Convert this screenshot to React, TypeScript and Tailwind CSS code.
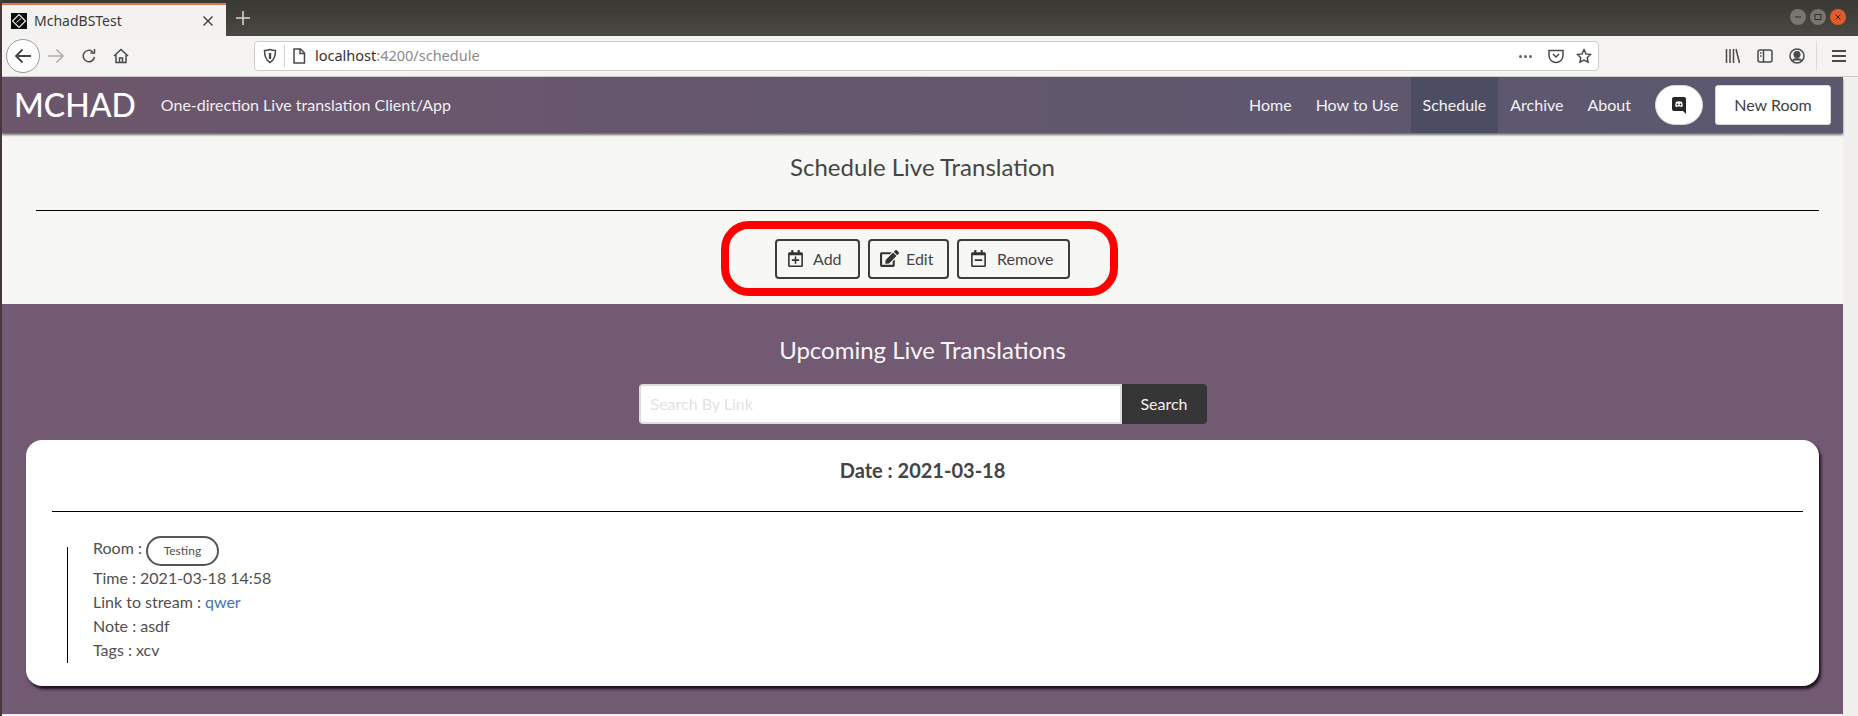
import React from "react";
import { FaRegCalendarPlus, FaRegCalendarMinus, FaEdit } from "react-icons/fa";

const ui = "font-['Noto_Sans',sans-serif]";

function Ico({ className, children, w = 16, h = 16 }: { className?: string; children: React.ReactNode; w?: number; h?: number }) {
  return (
    <svg width={w} height={h} viewBox={`0 0 ${w} ${h}`} fill="none" stroke="#4a4a4a" strokeWidth={1.5} className={className}>
      {children}
    </svg>
  );
}

function WinBtn({ bg, children }: { bg: string; children: React.ReactNode }) {
  return (
    <div className={`w-[16px] h-[16px] rounded-full flex items-center justify-center ${bg}`}>
      <svg width="8" height="8" viewBox="0 0 8 8" fill="none" stroke="#2f2e2a" strokeWidth="1">{children}</svg>
    </div>
  );
}

function NavItem({ label, active }: { label: string; active?: boolean }) {
  return (
    <a className={`h-full flex items-center px-[12px] text-[16px] text-[#f4f2f5] ${active ? "bg-[#4c4d63]" : ""}`}>{label}</a>
  );
}

function ActionBtn({ icon, label, className }: { icon: React.ReactNode; label: string; className: string }) {
  return (
    <button className={`h-[40px] flex items-center border-2 border-[#3c3c3c] rounded-[4px] text-[16px] text-[#454545] ${className}`}>
      {icon}
      <span>{label}</span>
    </button>
  );
}

export default function App() {
  return (
    <div className="w-[1858px] h-[716px] overflow-hidden flex flex-col border-l-2 border-[#45393a] bg-[#f2f0ee] font-['Lato',sans-serif]">
      <div className={`h-[36px] flex items-stretch bg-gradient-to-b from-[#3a3833] to-[#4a4843] ${ui}`}>
        <div className="mt-[3px] w-[224px] flex items-center pl-[9px] pr-[12px] bg-[#f3f2f0] border-t-2 border-[#e2734f]">
          <svg width="16" height="16" viewBox="0 0 16 16" className="shrink-0">
            <rect width="16" height="16" fill="#0b0b0b" />
            <path d="M8 1.5 14.5 8 8 14.5 1.5 8Z" fill="none" stroke="#e8e8e8" strokeWidth="1.2" />
            <path d="M5.5 9.5 10 5.5" stroke="#e8e8e8" strokeWidth="1" />
          </svg>
          <span className="ml-[7px] text-[14px] text-[#3b3b3b]">MchadBSTest</span>
          <svg width="12" height="12" viewBox="0 0 12 12" className="ml-auto" stroke="#3b3b3b" strokeWidth="1.4">
            <path d="M1.5 1.5 10.5 10.5M10.5 1.5 1.5 10.5" />
          </svg>
        </div>
        <div className="ml-[10px] flex items-center">
          <svg width="14" height="14" viewBox="0 0 14 14" stroke="#d9d8d4" strokeWidth="1.5"><path d="M7 0V14M0 7H14" /></svg>
        </div>
        <div className="ml-auto mr-[12px] flex items-center gap-[4px] pb-[2px]">
          <WinBtn bg="bg-[#77766f]"><path d="M1 4H7" /></WinBtn>
          <WinBtn bg="bg-[#77766f]"><rect x="1" y="1.5" width="6" height="5" /></WinBtn>
          <WinBtn bg="bg-[#e2592c]"><path d="M1.5 1.5 6.5 6.5M6.5 1.5 1.5 6.5" /></WinBtn>
        </div>
      </div>

      <div className={`h-[41px] flex items-center bg-[#f4f3f1] border-b border-[#cfcdca] ${ui}`}>
        <div className="ml-[4px] w-[34px] h-[34px] rounded-full border border-[#9a9a98] bg-white flex items-center justify-center">
          <svg width="18" height="16" viewBox="0 0 18 16" fill="none" stroke="#444" strokeWidth="1.8"><path d="M17 8H2M8.5 1.5 2 8l6.5 6.5" /></svg>
        </div>
        <svg width="17" height="16" viewBox="0 0 17 16" fill="none" stroke="#b0b0ae" strokeWidth="1.6" className="ml-[8px]"><path d="M0 8H15M8.5 1.5 15 8 8.5 14.5" /></svg>
        <Ico className="ml-[16px]">
          <path d="M13.5 9a5.7 5.7 0 1 1-1.6-5" />
          <path d="M13.5 1v4h-4" />
        </Ico>
        <Ico className="ml-[16px]">
          <path d="M1 8 8 1.5 15 8" />
          <path d="M3 7v7.5h10V7" />
          <path d="M6.5 14.5V10h3v4.5" />
        </Ico>
        <div className="ml-[125px] w-[1345px] h-[30px] flex items-center bg-white border border-[#cfcdca] rounded-[4px]">
          <Ico className="ml-[8px]" w={14} h={16}>
            <path d="M7 1.5c2 .8 3.6 1 5.5 1 0 6-1.6 9.8-5.5 12-3.9-2.2-5.5-6-5.5-12 1.9 0 3.5-.2 5.5-1Z" />
            <path d="M7 5v6" strokeWidth="2.4" />
          </Ico>
          <div className="ml-[7px] w-px h-[22px] bg-[#d5d4d1]" />
          <Ico className="ml-[7px]" w={14} h={16}>
            <path d="M2 1h6.5L12.500 5v10H2Z" />
            <path d="M8 1v4.500h4.500" />
          </Ico>
          <span className="ml-[9px] text-[14.500px] text-[#333]">
            localhost<span className="text-[#8a8a8a]">:4200/schedule</span>
          </span>
          <div className="ml-auto flex items-center">
            <div className="flex gap-[2px]">
              <span className="w-[3px] h-[3px] rounded-full bg-[#666]" />
              <span className="w-[3px] h-[3px] rounded-full bg-[#666]" />
              <span className="w-[3px] h-[3px] rounded-full bg-[#666]" />
            </div>
            <Ico className="ml-[16px]">
              <path d="M1 2.500h14v5a7 7 0 0 1-14 0Z" />
              <path d="M5 6l3 3 3-3" />
            </Ico>
            <svg width="16" height="16" viewBox="0 0 24 24" fill="none" stroke="#4a4a4a" strokeWidth="2.200" className="ml-[12px] mr-[6px]">
              <path d="M12 2.500l3 6.300 6.800.9-5 4.800 1.300 6.800-6.100-3.300-6.100 3.300 1.300-6.800-5-4.800 6.800-.9Z" />
            </svg>
          </div>
        </div>
        <Ico className="ml-[126px]">
          <path d="M1.500 1v14M5 1v14M8.500 1v14M11 1l3.500 14" />
        </Ico>
        <Ico className="ml-[16px]">
          <rect x="1" y="2" width="14" height="12" rx="2" />
          <path d="M6.500 2v12M3 5h1.500M3 8h1.500" />
        </Ico>
        <Ico className="ml-[16px]">
          <circle cx="8" cy="8" r="7" />
          <circle cx="8" cy="6.500" r="2.800" fill="#4a4a4a" />
          <path d="M3.500 12.500c2-2.500 7-2.500 9 0" fill="#4a4a4a" />
        </Ico>
        <div className="ml-[11px] w-px h-[30px] bg-[#dcdad7]" />
        <svg width="14" height="14" viewBox="0 0 14 14" stroke="#4a4a4a" strokeWidth="1.800" className="ml-[15px]"><path d="M0 2H14M0 7H14M0 12H14" /></svg>
      </div>

      <div className="w-[1841px] flex-1 flex flex-col">
        <nav className="relative z-10 h-[56px] shrink-0 flex items-center bg-gradient-to-r from-[#6d566c] to-[#59586f] shadow-[0_2px_2px_rgba(0,0,0,0.55)]">
          <span className="ml-[12px] text-[32px] font-medium leading-none text-white">MCHAD</span>
          <span className="ml-[25px] text-[16px] text-[#f1eef2]">One-direction Live translation Client/App</span>
          <div className="ml-auto h-full flex items-center">
            <NavItem label="Home" />
            <NavItem label="How to Use" />
            <NavItem active label="Schedule" />
            <NavItem label="Archive" />
            <NavItem label="About" />
            <div className="ml-[12px] w-[48px] h-[40px] rounded-full bg-white border border-[#d8d8d8] flex items-center justify-center">
              <svg width="14" height="19" viewBox="0 0 14 19">
                <path d="M2 1h10a2 2 0 0 1 2 2v15l-3-3H2a2 2 0 0 1-2-2V3a2 2 0 0 1 2-2Z" fill="#23272a" />
                <path d="M3.300 10.300c-.2-2 .3-3.500 1-4.500 1.600-.8 3.800-.8 5.400 0 .7 1 1.200 2.500 1 4.500-.6.500-1.200.8-1.700.9l-.5-.7H5.500l-.5.700c-.5-.1-1.100-.4-1.700-.9Z" fill="#fff" />
                <circle cx="5.500" cy="8.500" r=".9" fill="#23272a" />
                <circle cx="8.500" cy="8.500" r=".9" fill="#23272a" />
              </svg>
            </div>
            <button className="ml-[12px] mr-[12px] w-[116px] h-[40px] bg-white border border-[#d8d8d8] rounded-[3px] text-[16px] text-[#3f3f3f]">New Room</button>
          </div>
        </nav>

        <section className="h-[171px] shrink-0 bg-[#f7f7f3] flex flex-col pt-[16px]">
          <h1 className="text-[24px] leading-[36px] text-center text-[#454545]">Schedule Live Translation</h1>
          <div className="mt-[25px] ml-[34px] mr-[24px] h-px bg-black" />
          <div className="mt-[10px] flex justify-center pr-[6px]">
            <div className="h-[75px] flex items-center gap-[8px] border-[8px] border-[#ff0000] rounded-[28px] pl-[46px] pr-[40px]">
              <ActionBtn className="w-[85px] pl-[11px]" label="Add" icon={<FaRegCalendarPlus className="w-[15px] h-[17px] mr-[10px] text-[#333]" />} />
              <ActionBtn className="w-[81px] pl-[10px]" label="Edit" icon={<FaEdit className="w-[19px] h-[17px] mr-[7px] text-[#333]" />} />
              <ActionBtn className="w-[113px] pl-[12px]" label="Remove" icon={<FaRegCalendarMinus className="w-[15px] h-[17px] mr-[11px] text-[#333]" />} />
            </div>
          </div>
        </section>

        <section className="h-[410px] shrink-0 bg-[#715a72] flex flex-col pt-[28px]">
          <h2 className="text-[24px] leading-[36px] text-center text-[#f7f5f8]">Upcoming Live Translations</h2>
          <div className="mt-[16px] flex justify-center">
            <div className="w-[483px] h-[40px] bg-white border-2 border-[#dcdcdc] rounded-l-[4px] flex items-center pl-[10px] text-[16px] text-[#e2e2e2]">Search By Link</div>
            <button className="w-[85px] h-[40px] bg-[#363636] rounded-r-[4px] text-[16px] text-[#f2f2f2]">Search</button>
          </div>
          <div className="mt-[16px] mx-[24px] h-[246px] bg-white rounded-[16px] shadow-[2px_3px_3px_rgba(20,8,20,0.9)] flex flex-col pt-[15px] text-[#4f4f4f]">
            <h3 className="text-[20px] leading-[30px] font-bold text-center text-[#444]">Date : 2021-03-18</h3>
            <div className="mt-[26px] ml-[26px] mr-[16px] h-px shrink-0 bg-black" />
            <div className="mt-[35px] ml-[41px] h-[116px] border-l border-black pl-[25px] text-[16px] leading-[24px]">
              <div className="-mt-[11px] h-[30px] flex items-start">
                <span>Room :</span>
                <span className="ml-[4px] w-[73px] h-[30px] flex items-center justify-center rounded-full border-2 border-[#555] text-[12px] leading-none">Testing</span>
              </div>
              <div>Time : 2021-03-18 14:58</div>
              <div>Link to stream : <a className="text-[#3f73b8]">qwer</a></div>
              <div>Note : asdf</div>
              <div>Tags : xcv</div>
            </div>
          </div>
        </section>
      </div>
    </div>
  );
}
